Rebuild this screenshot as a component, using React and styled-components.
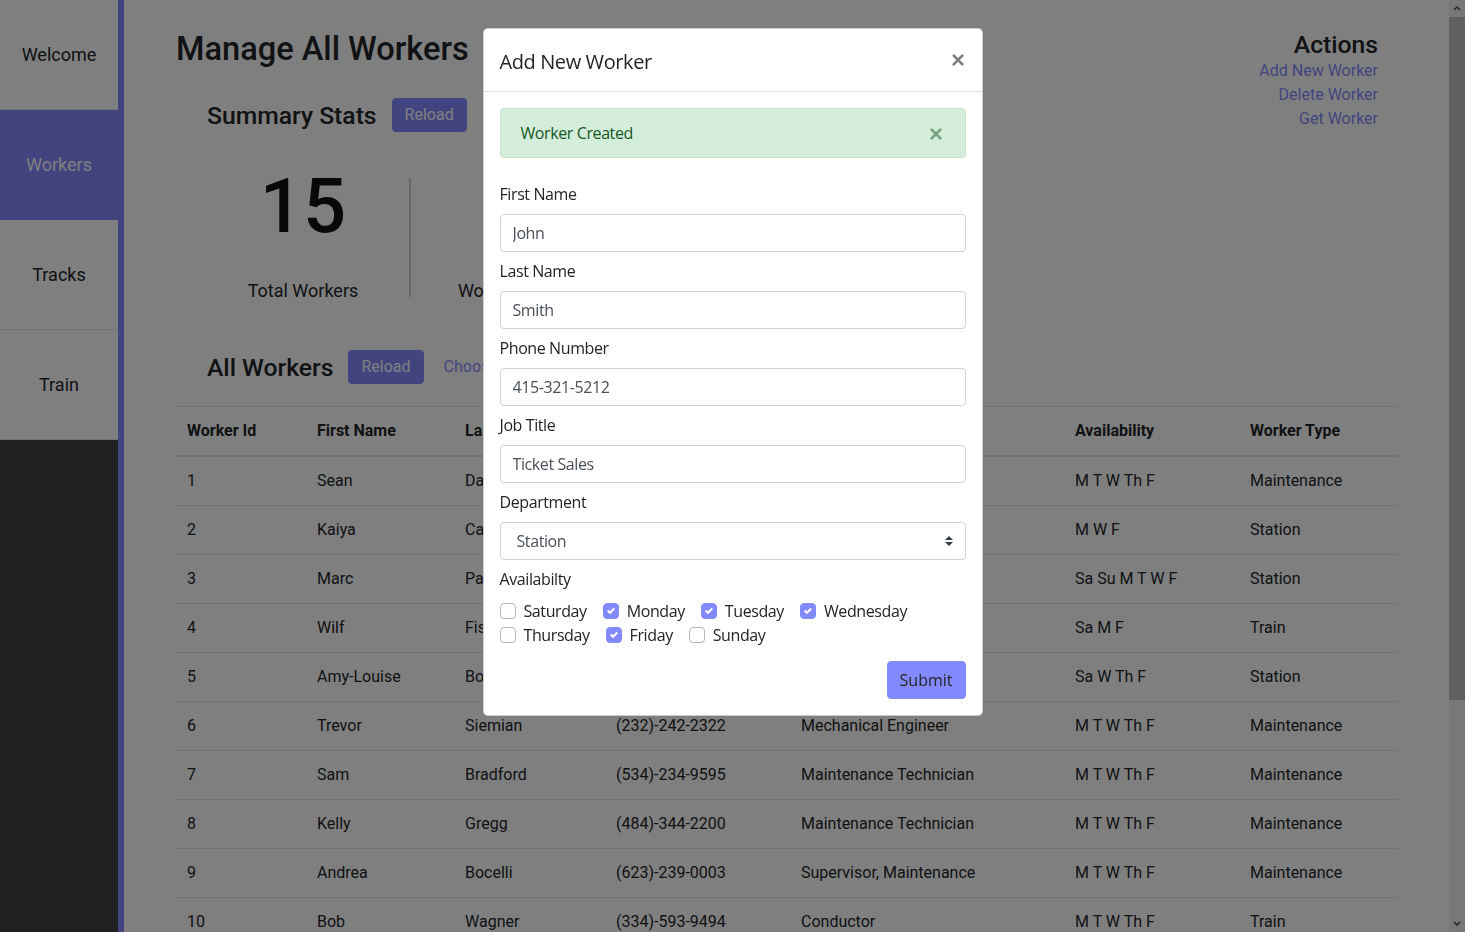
import React from "react";
import styled, { createGlobalStyle } from "styled-components";

const theme = "#8389ff";

const GlobalStyle = createGlobalStyle`
  * { box-sizing: border-box; }
  html, body { margin: 0; padding: 0; height: 100%; overflow: hidden; }
  body {
    font-family: Roboto, "Liberation Sans", sans-serif;
    color: #212529;
    background: #fff;
  }
`;

const workers = [
  [1, "Sean", "Davidson", "(415)-555-0132", "Track Inspector", "M T W Th F", "Maintenance"],
  [2, "Kaiya", "Carter", "(213)-445-9021", "Ticket Agent", "M W F", "Station"],
  [3, "Marc", "Patel", "(312)-808-1144", "Station Attendant", "Sa Su M T W F", "Station"],
  [4, "Wilf", "Fisher", "(646)-232-7788", "Conductor", "Sa M F", "Train"],
  [5, "Amy-Louise", "Bowen", "(702)-341-5590", "Customer Service", "Sa W Th F", "Station"],
  [6, "Trevor", "Siemian", "(232)-242-2322", "Mechanical Engineer", "M T W Th F", "Maintenance"],
  [7, "Sam", "Bradford", "(534)-234-9595", "Maintenance Technician", "M T W Th F", "Maintenance"],
  [8, "Kelly", "Gregg", "(484)-344-2200", "Maintenance Technician", "M T W Th F", "Maintenance"],
  [9, "Andrea", "Bocelli", "(623)-239-0003", "Supervisor, Maintenance", "M T W Th F", "Maintenance"],
  [10, "Bob", "Wagner", "(334)-593-9494", "Conductor", "M T W Th F", "Train"],
  [11, "Lena", "Moreau", "(415)-212-4410", "Ticket Sales", "Sa Su", "Station"],
  [12, "Omar", "Haddad", "(510)-998-3021", "Train Operator", "M T W", "Train"],
  [13, "Priya", "Nair", "(408)-775-1290", "Signal Technician", "T W Th F", "Maintenance"],
  [14, "Dylan", "Reeves", "(650)-301-8877", "Conductor", "Sa Su M", "Train"],
  [15, "Grace", "Okafor", "(925)-440-6612", "Station Manager", "M T W Th F", "Station"],
];

const columns = [
  ["Worker Id", 130],
  ["First Name", 148],
  ["Last Name", 151],
  ["Phone Number", 185],
  ["Job Title", 274],
  ["Availability", 175],
  ["Worker Type", 159],
];

const days = [
  [["Saturday", false], ["Monday", true], ["Tuesday", true], ["Wednesday", true]],
  [["Thursday", false], ["Friday", true], ["Sunday", false]],
];

const Frame = styled.div`
  display: flex;
  height: 100vh;
`;

const Shell = styled.div`
  flex: 1;
  height: 100vh;
  overflow-y: auto;
  display: flex;
  align-items: flex-start;
  scrollbar-width: none;
  &::-webkit-scrollbar { display: none; }
`;

// stand-in for the browser scrollbar of the page
const ScrollRail = styled.div`
  flex: 0 0 16px;
  display: flex;
  flex-direction: column;
  background: #f1f1f1;
`;

const RailButton = styled.div`
  height: 17px;
  display: flex;
  align-items: center;
  justify-content: center;
`;

const RailTrack = styled.div`
  flex: 1;
`;

const RailThumb = styled.div`
  height: 683px;
  background: #c1c1c1;
`;

const Sidebar = styled.nav`
  position: sticky;
  top: 0;
  flex: 0 0 124px;
  height: 100vh;
  background: #424242;
  border-right: 6px solid ${theme};
`;

const NavItem = styled.div`
  height: 110px;
  display: flex;
  align-items: center;
  justify-content: center;
  font-size: 18px;
  background: ${(p) => (p.active ? theme : "#fff")};
  color: ${(p) => (p.active ? "#fff" : "#212529")};
  border-bottom: 1px solid ${(p) => (p.active ? theme : "#e4e4e4")};
`;

const Main = styled.main`
  flex: 1;
  padding: 30px 51px 32px 52px;
`;

const TopRow = styled.div`
  display: flex;
  justify-content: space-between;
  align-items: flex-start;
`;

const Title = styled.h1`
  margin: 0;
  font-size: 32.6px;
  line-height: 38px;
  font-weight: 500;
`;

const SectionHead = styled.div`
  display: flex;
  align-items: center;
  gap: 15px;
  height: 34px;
  padding-left: 31px;
  margin-top: ${(p) => p.top}px;
`;

const SectionTitle = styled.h2`
  margin: 0;
  font-size: 24.7px;
  line-height: 29px;
  font-weight: 500;
`;

const Button = styled.button`
  font-family: inherit;
  font-size: 16px;
  line-height: 24px;
  padding: ${(p) => (p.big ? "6px 12px" : "4px 12px")};
  border: 1px solid ${theme};
  border-radius: 4px;
  background: ${theme};
  color: ${(p) => (p.big ? "#212529" : "#fff")};
`;

const TextLink = styled.a`
  color: ${theme};
  font-size: 16px;
  line-height: 24px;
  text-decoration: none;
  margin-left: 5px;
`;

const Stats = styled.div`
  display: flex;
  padding-left: 31px;
  margin-top: 34px;
`;

const Stat = styled.div`
  width: 192px;
  text-align: center;
`;

const StatNumber = styled.div`
  font-size: 76px;
  line-height: 80px;
  font-weight: 500;
  color: #111;
`;

const StatLabel = styled.div`
  margin-top: 31px;
  font-size: 18px;
  line-height: 27px;
`;

const StatDivider = styled.div`
  width: 2px;
  margin: 12px 10px 7px;
  background: #d0d0d0;
`;

const Actions = styled.div`
  text-align: right;
  padding: 1px 20px 0 0;
  display: flex;
  flex-direction: column;
`;

const ActionsTitle = styled.h3`
  margin: 0;
  font-size: 24.7px;
  line-height: 28px;
  font-weight: 500;
`;

const ActionLink = styled.a`
  color: ${theme};
  font-size: 16px;
  line-height: 24px;
  text-decoration: none;
`;

const Table = styled.table`
  width: 100%;
  margin-top: 22px;
  border-collapse: collapse;
  table-layout: fixed;
  font-size: 16px;
  line-height: 24px;

  th, td {
    text-align: left;
    padding: 12px 11px;
    border-top: 1px solid #dee2e6;
  }
  th {
    font-weight: 700;
    border-bottom: 2px solid #dee2e6;
  }
`;

const Backdrop = styled.div`
  position: fixed;
  inset: 0;
  background: rgba(0, 0, 0, 0.5);
  z-index: 10;
`;

const ModalLayer = styled.div`
  position: fixed;
  inset: 0;
  z-index: 20;
  font-family: "Segoe UI", "Open Sans", "Noto Sans", sans-serif;
  letter-spacing: -0.4px;
  color: #212529;
`;

const Dialog = styled.div`
  width: 500px;
  margin: 28px auto 0;
  background: #fff;
  border: 1px solid rgba(0, 0, 0, 0.2);
  border-radius: 5px;
`;

const ModalHeader = styled.div`
  display: flex;
  align-items: flex-start;
  padding: 16px;
  border-bottom: 1px solid #dee2e6;
`;

const ModalTitle = styled.h5`
  margin: 0;
  padding-top: 2px;
  height: 30px;
  font-size: 20px;
  line-height: 30px;
  font-weight: 400;
`;

const Close = styled.span`
  margin-left: auto;
  font-size: 24px;
  line-height: 24px;
  font-weight: 700;
  color: #000;
  opacity: 0.5;
  padding: 3px 1px 0 0;
  font-family: "Liberation Sans", Arial, sans-serif;
`;

const ModalBody = styled.div`
  padding: 16px;
`;

const Alert = styled.div`
  position: relative;
  padding: 12px 20px;
  margin-bottom: 24px;
  border: 1px solid #c3e6cb;
  border-radius: 4px;
  background: #d4edda;
  color: #155724;
  font-size: 16px;
  line-height: 24px;
`;

const AlertClose = styled.span`
  position: absolute;
  top: 0;
  right: 0;
  padding: 13px 22px;
  font-size: 24px;
  line-height: 24px;
  font-weight: 700;
  opacity: 0.5;
  font-family: "Liberation Sans", Arial, sans-serif;
`;

const Label = styled.label`
  display: block;
  font-size: 16px;
  line-height: 24px;
  margin-bottom: 8px;
`;

const Input = styled.input`
  display: block;
  width: 100%;
  height: 38px;
  margin-bottom: 7px;
  padding: 6px 12px;
  font-family: inherit;
  letter-spacing: inherit;
  font-size: 16px;
  line-height: 24px;
  color: #495057;
  border: 1px solid #ced4da;
  border-radius: 4px;
  background: #fff;
  outline: none;
`;

const SelectWrap = styled.div`
  position: relative;
  margin-bottom: 7px;
`;

const Select = styled.select`
  display: block;
  width: 100%;
  height: 38px;
  padding: 6px 28px 6px 16px;
  font-family: inherit;
  letter-spacing: inherit;
  font-size: 16px;
  line-height: 24px;
  color: #495057;
  border: 1px solid #ced4da;
  border-radius: 4px;
  background: #fff;
  appearance: none;
  outline: none;
`;

const SelectArrows = styled.svg`
  position: absolute;
  right: 13px;
  top: 14px;
  pointer-events: none;
`;

const CheckRows = styled.div`
  margin-bottom: 14px;
`;

const CheckRow = styled.div`
  display: flex;
`;

const Check = styled.div`
  display: flex;
  align-items: center;
  margin-right: 16px;
  font-size: 16px;
  line-height: 24px;
`;

const Box = styled.span`
  width: 16px;
  height: 16px;
  margin-right: 8px;
  border-radius: 4px;
  display: flex;
  align-items: center;
  justify-content: center;
  border: 1px solid ${(p) => (p.on ? theme : "#adb5bd")};
  background: ${(p) => (p.on ? theme : "#fff")};
`;

const Footer = styled.div`
  display: flex;
  justify-content: flex-end;
`;

function CheckBox({ label, on }) {
  return (
    <Check>
      <Box on={on}>
        {on && (
          <svg width="8" height="8" viewBox="0 0 8 8">
            <path fill="#fff" d="M6.564.75l-3.59 3.612-1.538-1.55L0 4.26 2.974 7.25 8 2.193z" />
          </svg>
        )}
      </Box>
      {label}
    </Check>
  );
}

function Chevron({ down }) {
  return (
    <svg width="8" height="5" viewBox="0 0 8 5">
      <path
        d={down ? "M1 1l3 3 3-3" : "M1 4l3-3 3 3"}
        fill="none"
        stroke="#505050"
        strokeWidth="1.6"
      />
    </svg>
  );
}

function AddWorkerModal() {
  return (
    <>
      <Backdrop />
      <ModalLayer>
        <Dialog>
          <ModalHeader>
            <ModalTitle>Add New Worker</ModalTitle>
            <Close>×</Close>
          </ModalHeader>
          <ModalBody>
            <Alert>
              Worker Created
              <AlertClose>×</AlertClose>
            </Alert>
            <Label>First Name</Label>
            <Input defaultValue="John" />
            <Label>Last Name</Label>
            <Input defaultValue="Smith" />
            <Label>Phone Number</Label>
            <Input defaultValue="415-321-5212" />
            <Label>Job Title</Label>
            <Input defaultValue="Ticket Sales" />
            <Label>Department</Label>
            <SelectWrap>
              <Select defaultValue="Station">
                <option>Station</option>
                <option>Train</option>
                <option>Maintenance</option>
              </Select>
              <SelectArrows width="8" height="10" viewBox="0 0 4 5">
                <path fill="#343a40" d="M2 0L0 2h4zm0 5L0 3h4z" />
              </SelectArrows>
            </SelectWrap>
            <Label>Availabilty</Label>
            <CheckRows>
              {days.map((row, i) => (
                <CheckRow key={i}>
                  {row.map(([d, on]) => (
                    <CheckBox key={d} label={d} on={on} />
                  ))}
                </CheckRow>
              ))}
            </CheckRows>
            <Footer>
              <Button big>Submit</Button>
            </Footer>
          </ModalBody>
        </Dialog>
      </ModalLayer>
    </>
  );
}

export default function App() {
  return (
    <>
      <GlobalStyle />
      <Frame>
        <Shell>
          <Sidebar>
            <NavItem>Welcome</NavItem>
            <NavItem active>Workers</NavItem>
            <NavItem>Tracks</NavItem>
            <NavItem>Train</NavItem>
          </Sidebar>
          <Main>
            <TopRow>
              <div>
                <Title>Manage All Workers</Title>
                <SectionHead top={30}>
                  <SectionTitle>Summary Stats</SectionTitle>
                  <Button>Reload</Button>
                </SectionHead>
                <Stats>
                  <Stat>
                    <StatNumber>15</StatNumber>
                    <StatLabel>Total Workers</StatLabel>
                  </Stat>
                  <StatDivider />
                  <Stat>
                    <StatNumber>9</StatNumber>
                    <StatLabel>Working Today</StatLabel>
                  </Stat>
                </Stats>
                <SectionHead top={46}>
                  <SectionTitle>All Workers</SectionTitle>
                  <Button>Reload</Button>
                  <TextLink href="#">Choose Columns</TextLink>
                </SectionHead>
              </div>
              <Actions>
                <ActionsTitle>Actions</ActionsTitle>
                <ActionLink href="#">Add New Worker</ActionLink>
                <ActionLink href="#">Delete Worker</ActionLink>
                <ActionLink href="#">Get Worker</ActionLink>
              </Actions>
            </TopRow>
            <Table>
              <colgroup>
                {columns.map(([c, w]) => (
                  <col key={c} style={{ width: w }} />
                ))}
              </colgroup>
              <thead>
                <tr>
                  {columns.map(([c]) => (
                    <th key={c}>{c}</th>
                  ))}
                </tr>
              </thead>
              <tbody>
                {workers.map((w) => (
                  <tr key={w[0]}>
                    {w.map((v, i) => (
                      <td key={i}>{v}</td>
                    ))}
                  </tr>
                ))}
              </tbody>
            </Table>
          </Main>
        </Shell>
        <ScrollRail>
          <RailButton>
            <Chevron />
          </RailButton>
          <RailTrack>
            <RailThumb />
          </RailTrack>
          <RailButton>
            <Chevron down />
          </RailButton>
        </ScrollRail>
      </Frame>
      <AddWorkerModal />
    </>
  );
}
